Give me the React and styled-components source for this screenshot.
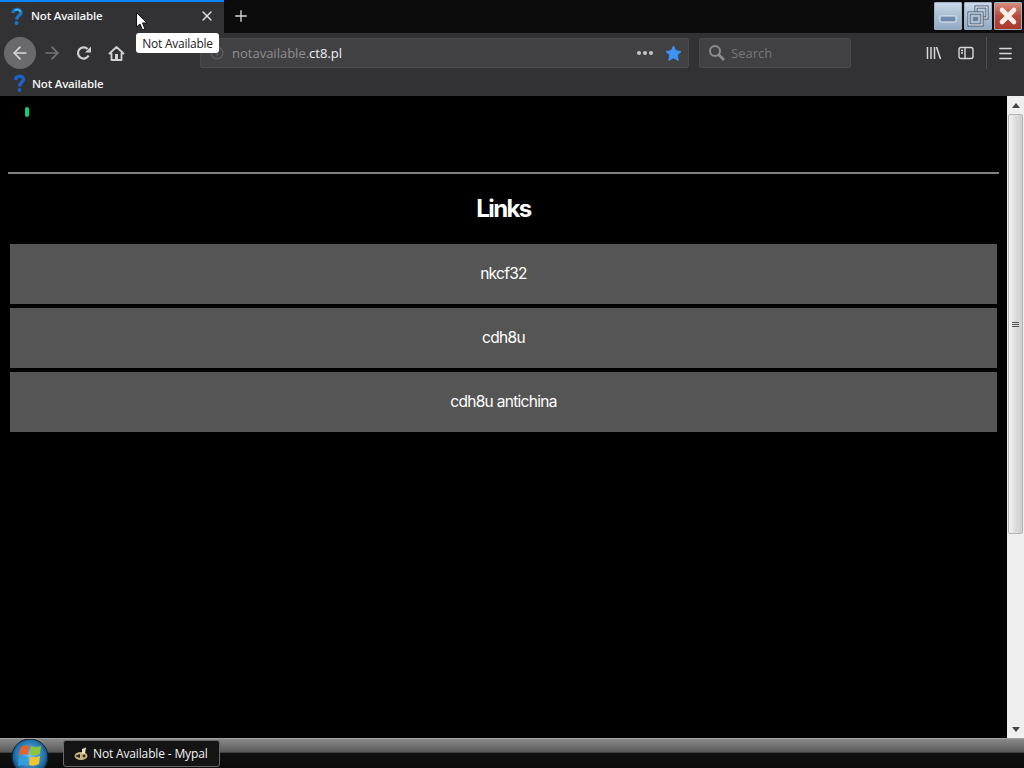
import React from "react";
import styled, { createGlobalStyle } from "styled-components";
import { ArrowLeft, ArrowRight, X, Plus, Menu, Info } from "lucide-react";

const GlobalStyle = createGlobalStyle`
  html, body {
    margin: 0;
    padding: 0;
    background: #000;
    overflow: hidden;
  }
`;

const Screen = styled.div`
  position: relative;
  width: 1024px;
  height: 768px;
  display: flex;
  flex-direction: column;
  overflow: hidden;
  font-family: "Open Sans", "Noto Sans", sans-serif;
  font-size: 12px;
`;

const TabBar = styled.div`
  height: 33px;
  flex: none;
  display: flex;
  align-items: stretch;
  background: #0c0c0d;
`;

const ActiveTab = styled.div`
  width: 224px;
  box-sizing: border-box;
  border-top: 2px solid #0a84ff;
  background: #323234;
  display: flex;
  align-items: center;
  padding: 0 9px 4px 11px;
  color: #f4f4f6;
  font-size: 11.5px;
  font-weight: 600;
  letter-spacing: -0.2px;
`;

const TabTitle = styled.span`
  flex: 1;
  margin-left: 8px;
`;

const NewTab = styled.div`
  width: 33px;
  display: flex;
  align-items: center;
  justify-content: center;
  padding-bottom: 2px;
  color: #d8d8da;
`;

const WindowButtons = styled.div`
  margin-left: auto;
  display: flex;
  gap: 2px;
  padding: 2px 2px 0 0;
`;

const WindowButton = styled.div`
  width: 28px;
  height: 28px;
  box-sizing: border-box;
  border: 1px solid #9fb0c2;
  border-radius: 1px;
  display: flex;
  align-items: center;
  justify-content: center;
  background: ${(p) =>
    p.$close
      ? "linear-gradient(#d98d80, #b84a3a 50%, #a83a2c)"
      : "linear-gradient(#c9d8e8, #a9bfd6 50%, #93abc4)"};
`;

const NavBar = styled.div`
  height: 40px;
  flex: none;
  display: flex;
  align-items: center;
  padding-left: 4px;
  background: #323234;
  color: #d4d4d6;
`;

const NavButton = styled.div`
  width: 32px;
  height: 32px;
  flex: none;
  display: flex;
  align-items: center;
  justify-content: center;
  border-radius: 50%;
  background: ${(p) => (p.$hover ? "#6a6a6c" : "transparent")};
  color: ${(p) => (p.$muted ? "#77777a" : "#d8d8da")};
`;

const UrlBox = styled.div`
  width: 489px;
  height: 30px;
  margin-left: 68px;
  box-sizing: border-box;
  border: 1px solid #4a4a4c;
  border-radius: 2px;
  background: #414143;
  display: flex;
  align-items: center;
  padding: 0 6px 0 9px;
  font-size: 13px;
  color: #8e8e90;
`;

const UrlText = styled.span`
  flex: 1;
  margin-left: 8px;

  b {
    font-weight: 400;
    color: #f0f0f2;
  }
`;

const Dots = styled.span`
  display: flex;
  gap: 2px;
  margin-right: 12px;

  i {
    width: 4px;
    height: 4px;
    border-radius: 50%;
    background: #c4c4c6;
  }
`;

const SearchBox = styled.div`
  width: 152px;
  height: 30px;
  margin-left: 10px;
  box-sizing: border-box;
  border: 1px solid #4a4a4c;
  border-radius: 2px;
  background: #414143;
  display: flex;
  align-items: center;
  gap: 5px;
  padding-left: 8px;
  font-size: 13px;
  color: #77777a;
`;

const ToolGroup = styled.div`
  margin-left: 67px;
  display: flex;
  align-items: center;
`;

const Divider = styled.div`
  width: 1px;
  height: 32px;
  margin: 0 2px 0 4px;
  background: #4e4e50;
`;

const BookmarkBar = styled.div`
  height: 23px;
  flex: none;
  box-sizing: border-box;
  display: flex;
  align-items: center;
  gap: 6px;
  padding: 0 0 3px 13px;
  background: #323234;
  color: #f4f4f6;
  font-size: 11.5px;
  font-weight: 600;
  letter-spacing: -0.2px;
`;

const Body = styled.div`
  flex: 1;
  min-height: 0;
  display: flex;
  background: #000;
`;

const Page = styled.main`
  flex: 1;
  padding: 0 8px;
  font-family: Inter, "Liberation Sans", sans-serif;
  color: #fff;
`;

const Top = styled.div`
  height: 76px;
  padding: 11px 0 0 17px;
  box-sizing: border-box;
`;

const Mark = styled.div`
  width: 4px;
  height: 10px;
  border-radius: 2px;
  background: #0fcf78;
`;

const Rule = styled.hr`
  margin: 0;
  border: 0;
  height: 2px;
  background: #808080;
`;

const Heading = styled.h1`
  margin: 20px 0 21px;
  font-size: 24px;
  line-height: 29px;
  font-weight: 700;
  letter-spacing: -1.6px;
  text-align: center;
`;

const LinkList = styled.div`
  display: flex;
  flex-direction: column;
  gap: 4px;
  margin: 0 2px;
`;

const LinkRow = styled.a`
  height: 60px;
  display: flex;
  align-items: center;
  justify-content: center;
  padding-bottom: 1px;
  box-sizing: border-box;
  background: #555;
  color: #fff;
  font-size: 15.5px;
  font-weight: 400;
  letter-spacing: -0.7px;
`;

const Scrollbar = styled.div`
  width: 17px;
  flex: none;
  box-sizing: border-box;
  background: #efefef;
  display: flex;
  flex-direction: column;
  align-items: center;
  justify-content: space-between;
`;

const ScrollArrow = styled.div`
  height: 18px;
  flex: none;
  display: flex;
  align-items: center;
  justify-content: center;
`;

const Thumb = styled.div`
  width: 15px;
  height: 420px;
  box-sizing: border-box;
  border: 1px solid #b4b4b4;
  border-radius: 2px;
  background: linear-gradient(90deg, #f4f4f4, #dcdcdc 50%, #cfcfcf);
  display: flex;
  flex-direction: column;
  gap: 1px;
  align-items: center;
  justify-content: center;

  i {
    width: 7px;
    height: 1px;
    background: #555;
  }
`;

const ScrollTrack = styled.div`
  flex: 1;
  width: 100%;
  display: flex;
  flex-direction: column;
  align-items: center;
`;

const Taskbar = styled.div`
  height: 30px;
  flex: none;
  box-sizing: border-box;
  border-top: 1px solid #a0a0a0;
  display: flex;
  align-items: center;
  padding-left: 10px;
  background: linear-gradient(#8a8a8a, #585858 45%, #101010 50%, #0c0c0c);
`;

const StartOrb = styled.div`
  width: 40px;
  height: 29px;
  flex: none;
  align-self: flex-start;
  overflow: visible;
`;

const TaskButton = styled.div`
  width: 157px;
  height: 27px;
  margin-left: 13px;
  box-sizing: border-box;
  border: 1px solid #6a6a6a;
  border-radius: 3px;
  background: #141414;
  display: flex;
  align-items: center;
  gap: 4px;
  padding-left: 9px;
  color: #f2f2f2;
  letter-spacing: -0.15px;
`;

const Tooltip = styled.div`
  position: absolute;
  left: 136px;
  top: 33px;
  width: 83px;
  height: 20px;
  box-sizing: border-box;
  border-radius: 3px;
  background: #fff;
  color: #222;
  letter-spacing: -0.25px;
  display: flex;
  align-items: center;
  justify-content: center;
`;

const Pointer = styled.svg`
  position: absolute;
  left: 136px;
  top: 12px;
`;

const TabIcon = () => (
  <svg width="12" height="18" viewBox="0 0 12 18">
    <path d="M2 6 C2 1.5 10 1 10 5.5 C10 8.5 6 8 5.5 12.5" fill="none" stroke="#1a78c8" strokeWidth="3.4" />
    <path d="M4 3.5 C6 2 9 3 9.5 5" fill="none" stroke="#4fc0ee" strokeWidth="1.4" />
    <circle cx="5.5" cy="16" r="1.9" fill="#1a78c8" />
  </svg>
);

const BookmarkIcon = () => (
  <svg width="13" height="18" viewBox="0 0 13 18">
    <path d="M2.5 6 C3 1 10.5 1 10.5 5.5 C10.5 8.5 6.5 8 6.5 12.5" fill="none" stroke="#1c62c4" strokeWidth="3.4" />
    <circle cx="6.5" cy="16" r="1.9" fill="#1c62c4" />
  </svg>
);

const ReloadIcon = () => (
  <svg width="16" height="16" viewBox="0 0 16 16" fill="none">
    <path d="M12.6 10.5 A5.6 5.6 0 1 1 11.6 4" stroke="#d0d0d2" strokeWidth="2.2" />
    <path d="M15 1.5 V7.5 H9 Z" fill="#d0d0d2" />
  </svg>
);

const HomeIcon = () => (
  <svg width="17" height="17" viewBox="0 0 17 17">
    <path
      d="M8.5 2 L15.5 8.5 L13.5 8.5 L13.5 15 L3.5 15 L3.5 8.5 L1.5 8.5 Z"
      fill="none"
      stroke="#d0d0d2"
      strokeWidth="1.8"
      strokeLinejoin="round"
    />
    <rect x="7" y="9" width="3" height="5" fill="#d0d0d2" />
  </svg>
);

const SearchGlass = () => (
  <svg width="18" height="18" viewBox="0 0 18 18" fill="none" stroke="#8e8e90">
    <circle cx="7" cy="7" r="5" strokeWidth="2" />
    <path d="M10.5 10.5 L16 16" strokeWidth="2.6" />
  </svg>
);

const LibraryIcon = () => (
  <svg width="16" height="16" viewBox="0 0 16 16" stroke="#d8d8da" strokeWidth="1.5" fill="none">
    <path d="M1.5 2v12M5 2v12M8.5 2v12M10.5 2l4 12" />
  </svg>
);

const SidebarIcon = () => (
  <svg width="16" height="16" viewBox="0 0 16 16" stroke="#d8d8da" strokeWidth="1.4" fill="none">
    <rect x="1" y="2.5" width="14" height="11" rx="2" />
    <path d="M7 2.5v11M3 5.5h2M3 8h2" />
  </svg>
);

const StarIcon = () => (
  <svg width="17" height="17" viewBox="0 0 17 17">
    <path
      d="M8.5 1 L10.8 5.8 L16 6.5 L12.2 10.1 L13.2 15.4 L8.5 12.8 L3.8 15.4 L4.8 10.1 L1 6.5 L6.2 5.8 Z"
      fill="#3d94f6"
      stroke="#3d94f6"
      strokeLinejoin="round"
    />
  </svg>
);

const RestoreIcon = () => (
  <svg width="24" height="24" viewBox="0 0 24 24" fill="none">
    <rect x="10" y="3" width="11" height="11" stroke="#3f5066" strokeWidth="3" />
    <rect x="10" y="3" width="11" height="11" stroke="#f0f4f8" strokeWidth="1.2" />
    <rect x="3" y="9" width="13" height="12" fill="#a9bfd6" stroke="#3f5066" strokeWidth="3" />
    <rect x="3" y="9" width="13" height="12" stroke="#f0f4f8" strokeWidth="1.2" />
    <rect x="7" y="13" width="5" height="4" fill="#6f8198" />
  </svg>
);

const WindowsOrb = () => (
  <svg width="40" height="30" viewBox="0 0 40 30">
    <defs>
      <radialGradient id="orb" cx="50%" cy="45%" r="60%">
        <stop offset="0" stopColor="#7cc4e8" />
        <stop offset="0.7" stopColor="#1f6ea8" />
        <stop offset="1" stopColor="#0a2c4a" />
      </radialGradient>
    </defs>
    <circle cx="20" cy="18" r="18" fill="url(#orb)" stroke="#141e28" />
    <path d="M11 8 Q15 5 19 7 L18 16 Q14 14 9 16 Z" fill="#e8602c" />
    <path d="M21 7 Q25 9 31 7 L30 15 Q25 17 20 16 Z" fill="#8cc63f" />
    <path d="M9 18 Q14 16 18 18 L17 27 Q13 25 8 27 Z" fill="#2f9ee0" />
    <path d="M20 18 Q25 19 30 17 L29 25 Q24 28 19 26 Z" fill="#f4c430" />
  </svg>
);

const TaskIcon = () => (
  <svg width="16" height="14" viewBox="0 0 16 14">
    <ellipse cx="8" cy="9" rx="6.5" ry="4" fill="#c9b77a" />
    <path d="M2 9 L7 7 L7 11 Z" fill="#2a2418" />
    <path d="M9 2 L13 0.5 L12 7 L9 7 Z" fill="#e8e0c0" />
    <circle cx="11" cy="9" r="1.4" fill="#2a2418" />
  </svg>
);

export default function App() {
  return (
    <Screen>
      <GlobalStyle />
      <TabBar>
        <ActiveTab>
          <TabIcon />
          <TabTitle>Not Available</TabTitle>
          <X size={16} strokeWidth={2} color="#e4e4e6" />
        </ActiveTab>
        <NewTab>
          <Plus size={18} strokeWidth={1.8} />
        </NewTab>
        <WindowButtons>
          <WindowButton>
            <svg width="18" height="22" viewBox="0 0 18 22">
              <rect x="1" y="11" width="16" height="6" rx="1" fill="#6f8aa8" stroke="#e8eef4" />
            </svg>
          </WindowButton>
          <WindowButton>
            <RestoreIcon />
          </WindowButton>
          <WindowButton $close>
            <X size={24} strokeWidth={4.6} color="#f6f0ea" />
          </WindowButton>
        </WindowButtons>
      </TabBar>
      <NavBar>
        <NavButton $hover>
          <ArrowLeft size={20} strokeWidth={2} />
        </NavButton>
        <NavButton $muted>
          <ArrowRight size={20} strokeWidth={2} />
        </NavButton>
        <NavButton>
          <ReloadIcon />
        </NavButton>
        <NavButton>
          <HomeIcon />
        </NavButton>
        <UrlBox>
          <Info size={14} color="#636365" />
          <UrlText>
            notavailable.<b>ct8.pl</b>
          </UrlText>
          <Dots>
            <i />
            <i />
            <i />
          </Dots>
          <StarIcon />
        </UrlBox>
        <SearchBox>
          <SearchGlass />
          Search
        </SearchBox>
        <ToolGroup>
          <NavButton>
            <LibraryIcon />
          </NavButton>
          <NavButton>
            <SidebarIcon />
          </NavButton>
          <Divider />
          <NavButton>
            <Menu size={17} strokeWidth={2} />
          </NavButton>
        </ToolGroup>
      </NavBar>
      <BookmarkBar>
        <BookmarkIcon />
        Not Available
      </BookmarkBar>
      <Body>
        <Page>
          <Top>
            <Mark />
          </Top>
          <Rule />
          <Heading>Links</Heading>
          <LinkList>
            <LinkRow>nkcf32</LinkRow>
            <LinkRow>cdh8u</LinkRow>
            <LinkRow>cdh8u antichina</LinkRow>
          </LinkList>
        </Page>
        <Scrollbar>
          <ScrollTrack>
            <ScrollArrow>
              <svg width="8" height="5" viewBox="0 0 8 5">
                <path d="M4 0 L8 5 L0 5 Z" fill="#444" />
              </svg>
            </ScrollArrow>
            <Thumb>
              <i />
              <i />
              <i />
            </Thumb>
          </ScrollTrack>
          <ScrollArrow>
            <svg width="8" height="5" viewBox="0 0 8 5">
              <path d="M0 0 L8 0 L4 5 Z" fill="#444" />
            </svg>
          </ScrollArrow>
        </Scrollbar>
      </Body>
      <Taskbar>
        <StartOrb>
          <WindowsOrb />
        </StartOrb>
        <TaskButton>
          <TaskIcon />
          Not Available - Mypal
        </TaskButton>
      </Taskbar>
      <Tooltip>Not Available</Tooltip>
      <Pointer width="12" height="19" viewBox="0 0 12 19">
        <path d="M0.5 0.5 L0.5 15 L4 12 L6.5 18 L9 17 L6.5 11 L11 11 Z" fill="#fff" stroke="#111" />
      </Pointer>
    </Screen>
  );
}
